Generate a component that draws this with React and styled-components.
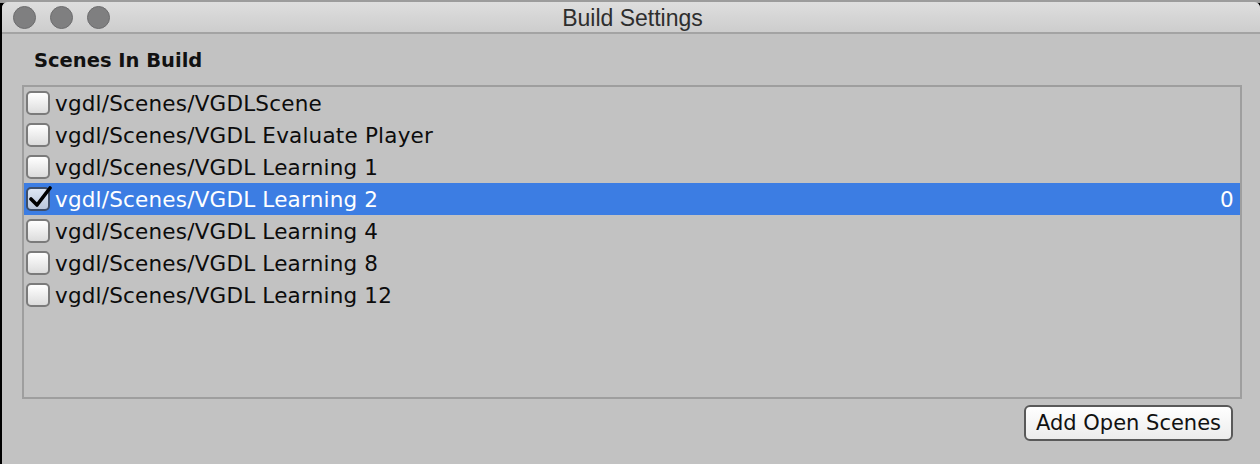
import React from 'react';
import styled, { createGlobalStyle } from 'styled-components';

const GlobalStyle = createGlobalStyle`
  html, body {
    margin: 0;
    padding: 0;
    background: #000;
  }
  body {
    font-family: "DejaVu Sans", Verdana, sans-serif;
  }
`;

const Desktop = styled.div`
  width: 1260px;
  height: 464px;
  background: linear-gradient(#9c9c9c 0, #9c9c9c 3px, #000 3px);
  padding-top: 2px;
  box-sizing: border-box;
  overflow: hidden;
`;

const Window = styled.div`
  margin-left: 2px;
  height: 462px;
  display: flex;
  flex-direction: column;
  background: #c2c2c2;
  border-top-left-radius: 6px;
  border-top-right-radius: 6px;
  overflow: hidden;
`;

const TitleBar = styled.div`
  height: 30px;
  display: grid;
  grid-template-columns: 1fr auto 1fr;
  align-items: center;
  background: linear-gradient(#dedede, #cdcdcd);
  border-bottom: 2px solid #a3a3a3;
  padding-left: 11px;
`;

const Lights = styled.div`
  display: flex;
  gap: 14px;
`;

const Light = styled.span`
  width: 21px;
  height: 21px;
  border-radius: 50%;
  background: #7f7f80;
  border: 1px solid #6c6c6d;
`;

const Title = styled.div`
  font-family: "Liberation Sans", Arial, sans-serif;
  font-size: 23px;
  color: #2e2e2e;
  padding-top: 2px;
  margin-left: -8px;
`;

const Content = styled.div`
  flex: 1;
  display: flex;
  flex-direction: column;
  padding: 15px 18px 0 20px;
`;

const Heading = styled.div`
  font-weight: bold;
  font-size: 19.5px;
  line-height: 24px;
  color: #111;
  padding-left: 12px;
  margin-bottom: 12px;
`;

const ListBox = styled.div`
  height: 310px;
  border: 2px solid #9e9e9e;
  display: flex;
  flex-direction: column;
`;

const Row = styled.div`
  height: 32px;
  display: flex;
  align-items: center;
  gap: 5px;
  padding: 0 6px 0 2px;
  font-size: 21.5px;
  letter-spacing: 0.2px;
  color: ${p => (p.$selected ? '#fff' : '#0c0c0c')};
  background: ${p => (p.$selected ? '#3c7de3' : 'transparent')};
`;

const Box = styled.span`
  position: relative;
  width: 20px;
  height: 20px;
  flex: none;
  border: 2px solid ${p => (p.$checked ? '#3d4e69' : '#7b7b7b')};
  border-radius: 5px;
  background: ${p =>
    p.$checked
      ? 'linear-gradient(#dde6f3, #b9c6db)'
      : 'linear-gradient(#ffffff, #dcdcdc)'};
`;

const Tick = styled.svg`
  position: absolute;
  left: 1px;
  top: -4px;
`;

const Label = styled.span`
  flex: 1;
  white-space: nowrap;
`;

const Index = styled.span``;

const Footer = styled.div`
  display: flex;
  justify-content: flex-end;
  padding: 6px 9px 0 0;
`;

const Button = styled.button`
  font-family: "DejaVu Sans", Verdana, sans-serif;
  font-size: 21px;
  color: #111;
  width: 209px;
  height: 36px;
  padding: 0;
  border: 2px solid #595959;
  border-radius: 6px;
  background: linear-gradient(#ffffff, #ececec);
`;

const scenes = [
  'vgdl/Scenes/VGDLScene',
  'vgdl/Scenes/VGDL Evaluate Player',
  'vgdl/Scenes/VGDL Learning 1',
  'vgdl/Scenes/VGDL Learning 2',
  'vgdl/Scenes/VGDL Learning 4',
  'vgdl/Scenes/VGDL Learning 8',
  'vgdl/Scenes/VGDL Learning 12',
];

function SceneRow({ name, checked, index }) {
  return (
    <Row $selected={checked}>
      <Box $checked={checked}>
        {checked && (
          <Tick width="24" height="24" viewBox="0 0 24 24">
            <path d="M2 14 L8 20 L21 3" fill="none" stroke="#000" strokeWidth="3.6" strokeLinecap="round" strokeLinejoin="round" />
          </Tick>
        )}
      </Box>
      <Label>{name}</Label>
      {checked && <Index>{index}</Index>}
    </Row>
  );
}

export default function App() {
  return (
    <>
      <GlobalStyle />
      <Desktop>
        <Window>
          <TitleBar>
            <Lights>
              <Light />
              <Light />
              <Light />
            </Lights>
            <Title>Build Settings</Title>
            <span />
          </TitleBar>
          <Content>
            <Heading>Scenes In Build</Heading>
            <ListBox>
              {scenes.map((s, i) => (
                <SceneRow key={s} name={s} checked={i === 3} index={0} />
              ))}
            </ListBox>
            <Footer>
              <Button>Add Open Scenes</Button>
            </Footer>
          </Content>
        </Window>
      </Desktop>
    </>
  );
}
